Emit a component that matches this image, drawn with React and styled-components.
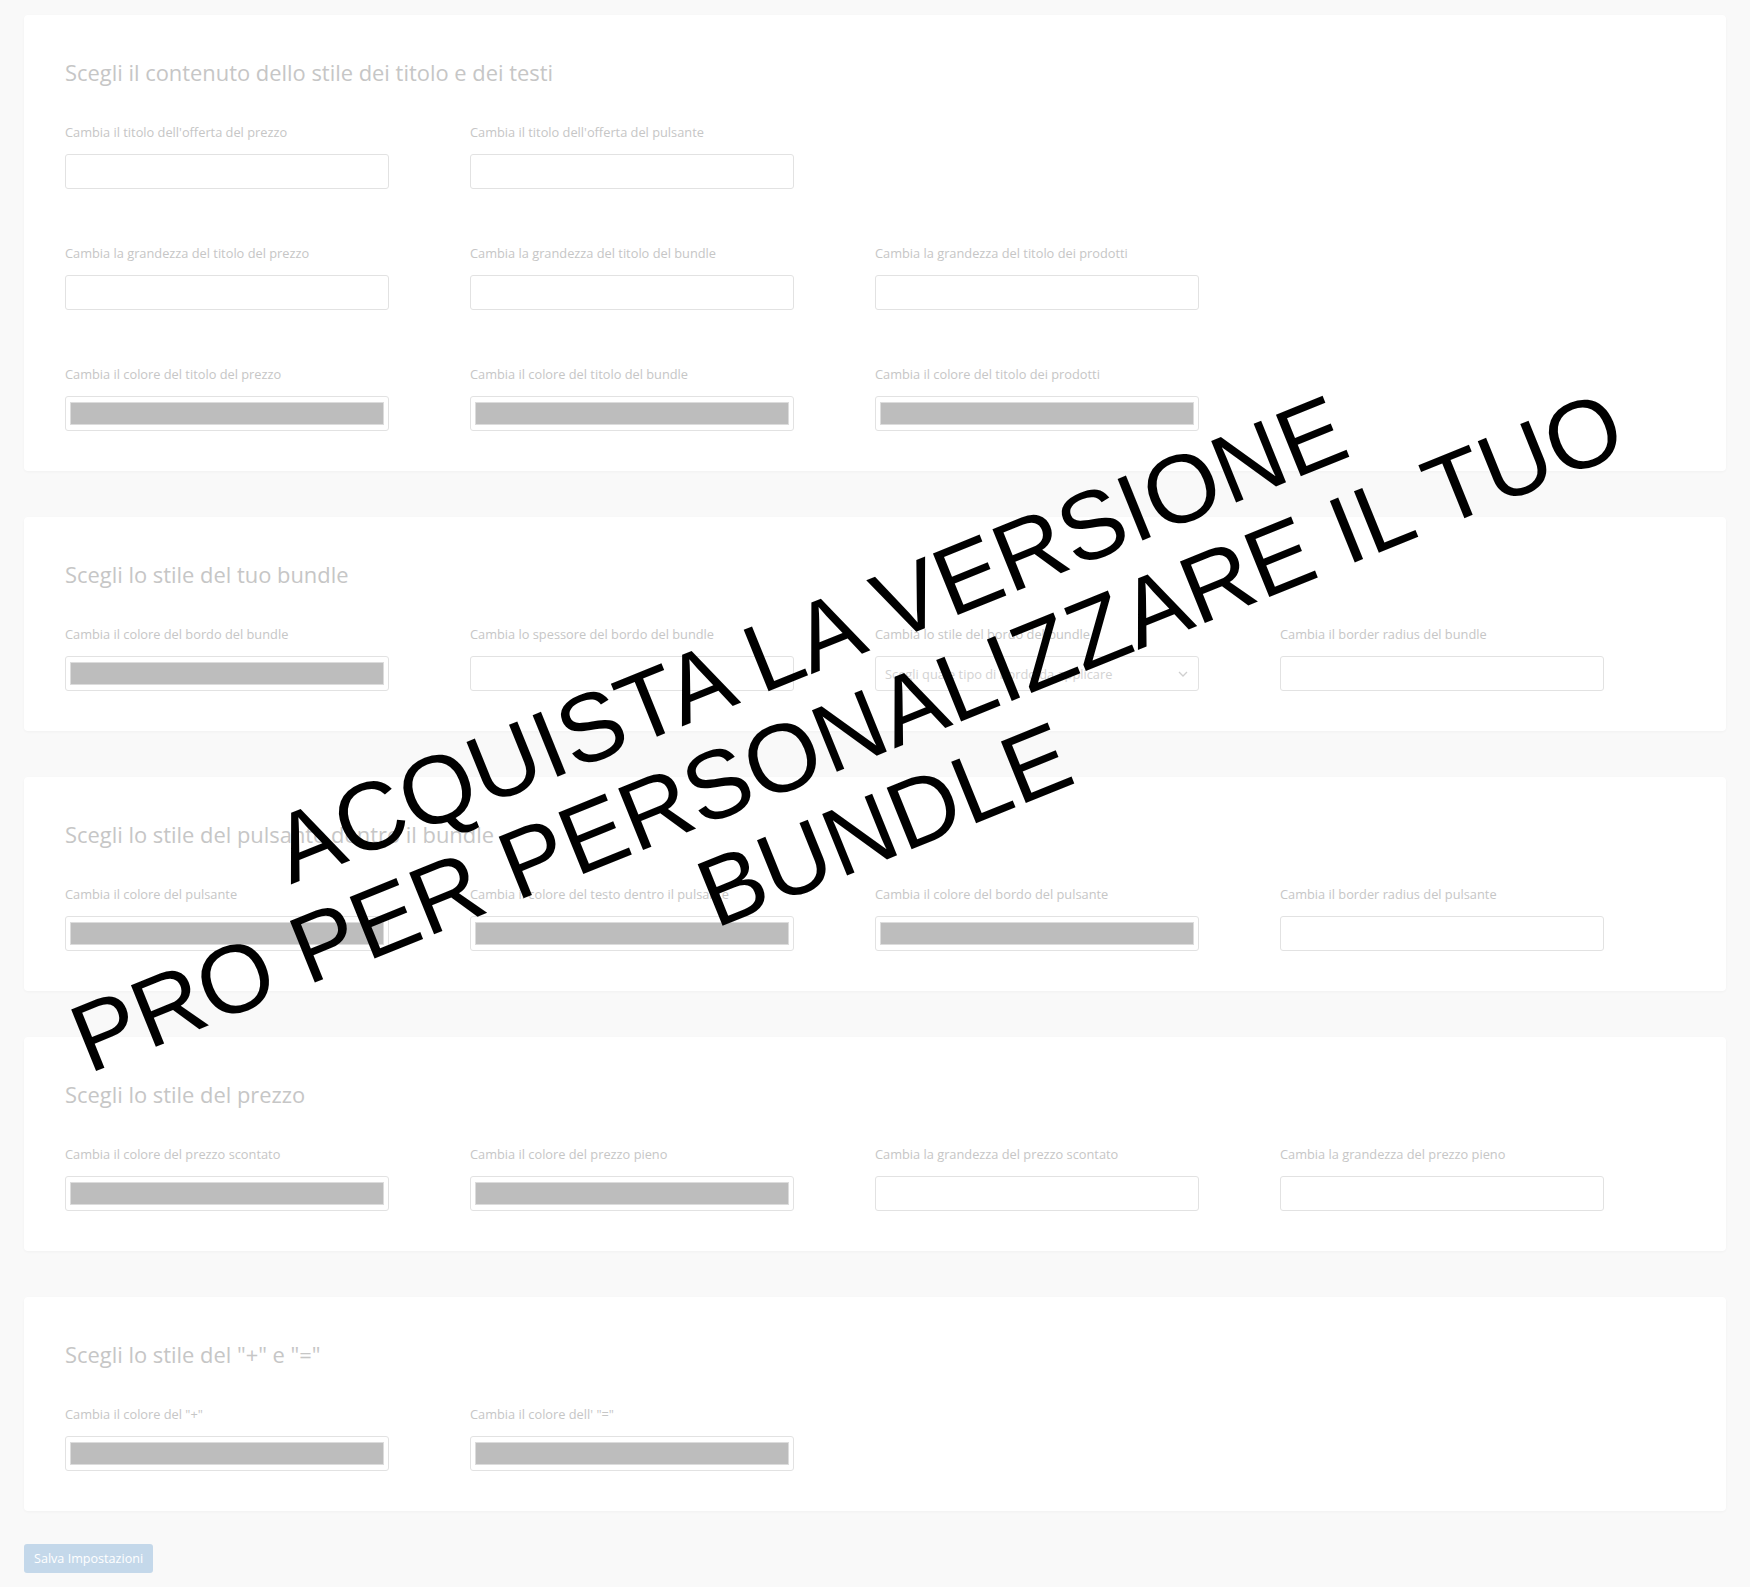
import styled, { createGlobalStyle } from "styled-components";

const GlobalStyle = createGlobalStyle`
  html, body {
    margin: 0;
    padding: 0;
    background: #f9f9f9;
  }
  body {
    font-family: "Open Sans", "Noto Sans", sans-serif;
  }
`;

const Page = styled.div`
  position: relative;
  min-height: 100vh;
  box-sizing: border-box;
  padding: 15px 24px 14px;
  display: flex;
  flex-direction: column;
  overflow: hidden;
`;

const Sections = styled.div`
  display: flex;
  flex-direction: column;
  gap: 46px;
`;

const Card = styled.section`
  background: #fff;
  border-radius: 4px;
  box-shadow: 0 1px 3px rgba(0, 0, 0, 0.035);
  padding: 43px 41px 40px;
`;

const CardTitle = styled.h2`
  margin: 0 0 35px;
  font-size: 21.9px;
  line-height: 30px;
  font-weight: 400;
  color: #c6c6c6;
`;

const Rows = styled.div`
  display: flex;
  flex-direction: column;
  gap: 55px;
`;

const Row = styled.div`
  display: grid;
  grid-template-columns: repeat(4, 1fr);
`;

const Field = styled.div`
  display: flex;
  flex-direction: column;
  gap: 13px;
`;

const Label = styled.label`
  font-size: 12.8px;
  line-height: 18px;
  color: #c6c6c6;
  white-space: nowrap;
`;

const TextInput = styled.input`
  width: 80%;
  height: 35px;
  box-sizing: border-box;
  border: 1px solid #e2e2e2;
  border-radius: 3px;
  background: #fff;
  outline: none;
`;

const ColorInput = styled.input`
  -webkit-appearance: none;
  appearance: none;
  width: 80%;
  height: 35px;
  box-sizing: border-box;
  margin: 0;
  padding: 5px 4px;
  border: 1px solid #e2e2e2;
  border-radius: 3px;
  background: #fff;

  &::-webkit-color-swatch-wrapper {
    padding: 0;
  }
  &::-webkit-color-swatch {
    border: 1px solid #dcdcdc;
    border-radius: 0;
  }
`;

const SelectWrap = styled.div`
  position: relative;
  width: 80%;
`;

const Select = styled.select`
  -webkit-appearance: none;
  appearance: none;
  width: 100%;
  height: 35px;
  box-sizing: border-box;
  padding: 0 30px 0 9px;
  border: 1px solid #e2e2e2;
  border-radius: 3px;
  background: #fff;
  font-family: "Open Sans", sans-serif;
  font-size: 12.8px;
  color: #d2d2d2;
`;

const Chevron = styled.svg`
  position: absolute;
  right: 10px;
  top: 50%;
  transform: translateY(-50%);
  pointer-events: none;
`;

const SaveButton = styled.button`
  align-self: flex-start;
  margin-top: 33px;
  height: 29px;
  padding: 0 10px;
  border: none;
  border-radius: 3px;
  background: #c4d8ea;
  color: #fff;
  font-family: "Open Sans", sans-serif;
  font-size: 12.6px;
`;

const Watermark = styled.div`
  position: absolute;
  left: 847px;
  top: 732px;
  transform: translate(-50%, -50%) rotate(-22deg);
  font-family: "Liberation Sans", Arial, sans-serif;
  font-size: 96.5px;
  line-height: 100px;
  color: #000;
  text-align: center;
  white-space: nowrap;
  pointer-events: none;
`;

const sections = [
  {
    title: "Scegli il contenuto dello stile dei titolo e dei testi",
    rows: [
      [
        { label: "Cambia il titolo dell'offerta del prezzo", kind: "text" },
        { label: "Cambia il titolo dell'offerta del pulsante", kind: "text" },
      ],
      [
        { label: "Cambia la grandezza del titolo del prezzo", kind: "text" },
        { label: "Cambia la grandezza del titolo del bundle", kind: "text" },
        { label: "Cambia la grandezza del titolo dei prodotti", kind: "text" },
      ],
      [
        { label: "Cambia il colore del titolo del prezzo", kind: "color" },
        { label: "Cambia il colore del titolo del bundle", kind: "color" },
        { label: "Cambia il colore del titolo dei prodotti", kind: "color" },
      ],
    ],
  },
  {
    title: "Scegli lo stile del tuo bundle",
    rows: [
      [
        { label: "Cambia il colore del bordo del bundle", kind: "color" },
        { label: "Cambia lo spessore del bordo del bundle", kind: "text" },
        { label: "Cambia lo stile del bordo del bundle", kind: "select" },
        { label: "Cambia il border radius del bundle", kind: "text" },
      ],
    ],
  },
  {
    title: "Scegli lo stile del pulsante dentro il bundle",
    rows: [
      [
        { label: "Cambia il colore del pulsante", kind: "color" },
        { label: "Cambia il colore del testo dentro il pulsante", kind: "color" },
        { label: "Cambia il colore del bordo del pulsante", kind: "color" },
        { label: "Cambia il border radius del pulsante", kind: "text" },
      ],
    ],
  },
  {
    title: "Scegli lo stile del prezzo",
    rows: [
      [
        { label: "Cambia il colore del prezzo scontato", kind: "color" },
        { label: "Cambia il colore del prezzo pieno", kind: "color" },
        { label: "Cambia la grandezza del prezzo scontato", kind: "text" },
        { label: "Cambia la grandezza del prezzo pieno", kind: "text" },
      ],
    ],
  },
  {
    title: 'Scegli lo stile del "+" e "="',
    rows: [
      [
        { label: 'Cambia il colore del "+"', kind: "color" },
        { label: 'Cambia il colore dell\' "="', kind: "color" },
      ],
    ],
  },
];

function Control({ kind }) {
  if (kind === "color") {
    return <ColorInput type="color" defaultValue="#bdbdbd" />;
  }
  if (kind === "select") {
    return (
      <SelectWrap>
        <Select defaultValue="">
          <option value="">Scegli quale tipo di bordo da applicare</option>
          <option value="solid">solid</option>
          <option value="dashed">dashed</option>
          <option value="dotted">dotted</option>
        </Select>
        <Chevron width="12" height="12" viewBox="0 0 12 12">
          <path d="M2 4l4 4 4-4" fill="none" stroke="#cfcfcf" strokeWidth="1.3" />
        </Chevron>
      </SelectWrap>
    );
  }
  return <TextInput type="text" />;
}

export default function App() {
  return (
    <Page>
      <GlobalStyle />
      <Sections>
        {sections.map((section) => (
          <Card key={section.title}>
            <CardTitle>{section.title}</CardTitle>
            <Rows>
              {section.rows.map((row, i) => (
                <Row key={i}>
                  {row.map((field) => (
                    <Field key={field.label}>
                      <Label>{field.label}</Label>
                      <Control kind={field.kind} />
                    </Field>
                  ))}
                </Row>
              ))}
            </Rows>
          </Card>
        ))}
      </Sections>
      <SaveButton>Salva Impostazioni</SaveButton>
      <Watermark>
        ACQUISTA LA VERSIONE
        <br />
        PRO PER PERSONALIZZARE IL TUO
        <br />
        BUNDLE
      </Watermark>
    </Page>
  );
}
